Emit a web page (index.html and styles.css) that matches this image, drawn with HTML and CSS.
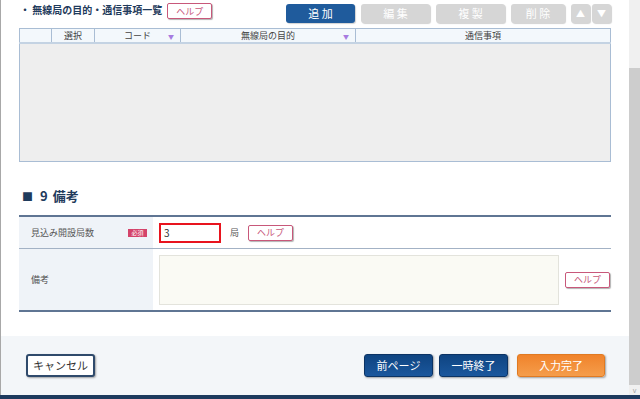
FILE: index.html
```html
<!DOCTYPE html>
<html lang="ja">
<head>
  <meta charset="UTF-8" />
  <title>備考</title>
  <link rel="stylesheet" href="styles.css">
</head>
<body>
  <div class="window">
    <div class="frame">
      <div class="main">
        <div class="content">
          <div class="list-bar">
            <span class="list-title">・ 無線局の目的・通信事項一覧</span>
            <button class="help">ヘルプ</button>
            <div class="tools">
              <button class="tool tool-on">追 加</button>
              <button class="tool">編 集</button>
              <button class="tool">複 製</button>
              <button class="tool tool-del">削 除</button>
              <button class="tool tool-arrow">▲</button>
              <button class="tool tool-arrow">▼</button>
            </div>
          </div>

          <table class="grid">
            <colgroup>
              <col style="width:32px"><col style="width:43px"><col style="width:86px"><col style="width:175px"><col>
            </colgroup>
            <thead>
              <tr>
                <th></th>
                <th>選択</th>
                <th class="sort">コード<span class="tri">▼</span></th>
                <th class="sort">無線局の目的<span class="tri">▼</span></th>
                <th>通信事項</th>
              </tr>
            </thead>
            <tbody>
              <tr class="empty"><td colspan="5"></td></tr>
            </tbody>
          </table>

          <h2 class="section"><span class="sq">■</span><span class="sec-no">9</span>備考</h2>

          <div class="form">
            <div class="form-row">
              <div class="label">見込み開設局数<span class="req">必須</span></div>
              <div class="field">
                <input class="num" type="text" value="3">
                <span class="unit">局</span>
                <button class="help">ヘルプ</button>
              </div>
            </div>
            <div class="form-row form-row-tall">
              <div class="label">備考</div>
              <div class="field">
                <textarea class="memo"></textarea>
                <button class="help">ヘルプ</button>
              </div>
            </div>
          </div>
        </div>

        <div class="footer">
          <button class="btn btn-cancel">キャンセル</button>
          <div class="footer-right">
            <button class="btn btn-navy">前ページ</button>
            <button class="btn btn-navy">一時終了</button>
            <button class="btn btn-orange">入力完了</button>
          </div>
        </div>
      </div>

      <div class="scroll">
        <div class="thumb"></div>
        <div class="scroll-arrow">v</div>
      </div>
    </div>
    <div class="bottom-bar"></div>
  </div>
</body>
</html>
```

FILE: styles.css
```css
:root {
  --navy: #1f3b5c;
  --line: #a9bdd4;
  --pink: #c8587a;
  --label-bg: #eff3f8;
}
html, body { margin: 0; padding: 0; }
body {
  font-family: "Noto Sans CJK JP", "Noto Sans", sans-serif;
  color: #333;
  background: #fff;
}
button { font-family: inherit; cursor: pointer; }

.window {
  width: 640px;
  height: 399px;
  display: flex;
  flex-direction: column;
  overflow: hidden;
}
.frame { flex: 1; display: flex; min-height: 0; }
.main {
  flex: 1;
  display: flex;
  flex-direction: column;
  border-left: 1px solid #a8a8a8;
}
.content { flex: 1; padding: 4px 18px 0 18px; }

/* list header */
.list-bar { display: flex; align-items: center; height: 19px; }
.list-title {
  font-size: 10px;
  font-weight: bold;
  color: var(--navy);
  line-height: 14px;
  margin-left: 1px;
  margin-top: -7px;
}
.help {
  height: 16px;
  width: 45px;
  padding: 0;
  border: 1px solid var(--pink);
  border-radius: 2px;
  background: #fff;
  color: var(--pink);
  font-size: 9px;
  line-height: 13px;
  box-shadow: 1px 1px 1px rgba(0,0,0,0.3);
}
.list-bar .help { margin-left: 5px; margin-top: -5px; }
.tools { margin-left: auto; display: flex; gap: 5px; }
.tool {
  width: 69px;
  height: 19px;
  padding: 0;
  border: none;
  border-radius: 3px;
  background: #d6d6d6;
  color: #fff;
  font-size: 11px;
  line-height: 19px;
  box-shadow: 1px 1px 1px rgba(0,0,0,0.18);
}
.tool + .tool { margin-left: 1px; }
.tool-on { background: #1f5b9c; }
.tool-del { width: 54px; }
.tool-arrow { width: 19px; font-size: 9px; }
.tool-arrow + .tool-arrow { margin-left: -3px; }

/* grid */
.grid {
  width: 100%;
  margin-top: 5px;
  border-collapse: collapse;
  table-layout: fixed;
  border: 1px solid var(--line);
}
.grid th {
  height: 13px;
  padding: 0;
  background: #f3f8fc;
  border: 1px solid var(--line);
  border-bottom: 2px solid #c4d3e3;
  font-size: 9px;
  font-weight: normal;
  color: #444;
  line-height: 13px;
  position: relative;
}
.tri {
  position: absolute;
  right: 6px;
  top: 1px;
  font-size: 6px;
  color: #a77be0;
}
.grid .empty td { height: 117px; background: #eeeeee; padding: 0; }

/* section */
.section {
  margin: 27px 0 0 3px;
  font-size: 13px;
  font-weight: bold;
  color: var(--navy);
  line-height: 14px;
  height: 14px;
}
.sq { font-size: 11px; margin-right: 7px; }
.sec-no { margin-right: 5px; }

/* form */
.form {
  margin-top: 12px;
  border-top: 2px solid #5f7593;
  border-bottom: 2px solid #5f7593;
}
.form-row { display: flex; height: 31px; }
.form-row + .form-row { border-top: 1px solid #a3b2c5; }
.form-row-tall { height: 61px; }
.label {
  width: 122px;
  padding-left: 12px;
  background: var(--label-bg);
  display: flex;
  align-items: center;
  font-size: 9px;
  color: #555;
}
.req {
  margin-left: auto;
  margin-right: 6px;
  background: #d4436a;
  color: #fff;
  font-size: 6px;
  line-height: 8px;
  padding: 0 2px;
  width: 15px;
  text-align: center;
}
.field { flex: 1; display: flex; align-items: center; padding-left: 6px; }
.num {
  box-sizing: border-box;
  width: 62px;
  height: 20px;
  margin: 0;
  padding: 0 3px;
  border: 2px solid #e8141e;
  font-family: inherit;
  font-size: 10px;
  color: #333;
  outline: none;
}
.unit { font-size: 9px; color: #555; margin: 0 9px 0 9px; }
.memo {
  box-sizing: border-box;
  width: 400px;
  height: 50px;
  margin: 0;
  border: 1px solid #e3e3dc;
  background: #fafaf4;
  resize: none;
}
.form-row-tall .help { margin-left: 6px; }

/* footer */
.footer {
  height: 59px;
  background: #f3f6f9;
  display: flex;
  align-items: center;
  padding: 0 24px 0 25px;
}
.btn {
  height: 23px;
  padding: 0;
  border-radius: 3px;
  font-size: 11px;
  line-height: 19px;
  box-shadow: 1px 1px 2px rgba(0,0,0,0.35);
}
.btn-cancel {
  width: 69px;
  background: #fff;
  border: 2px solid #2f4a6c;
  color: #333;
}
.footer-right { margin-left: auto; display: flex; gap: 6px; }
.btn-navy {
  width: 69px;
  border: 1px solid #0b3364;
  background: linear-gradient(#0f4481, #1a579d);
  color: #fff;
}
.btn-orange {
  width: 88px;
  margin-left: 3px;
  border: 1px solid #e07a22;
  background: linear-gradient(#f0832b, #f59d4b);
  color: #fff;
}

/* scrollbar */
.scroll {
  width: 11px;
  background: #f0f0f0;
  display: flex;
  flex-direction: column;
  padding-top: 68px;
}
.thumb { flex: 1; background: #cdcdcd; margin-bottom: 2px; }
.scroll-arrow {
  height: 8px;
  font-size: 7px;
  line-height: 6px;
  text-align: center;
  color: #a0a0a0;
}
.bottom-bar { height: 4px; background: #1d3a5e; }
```
